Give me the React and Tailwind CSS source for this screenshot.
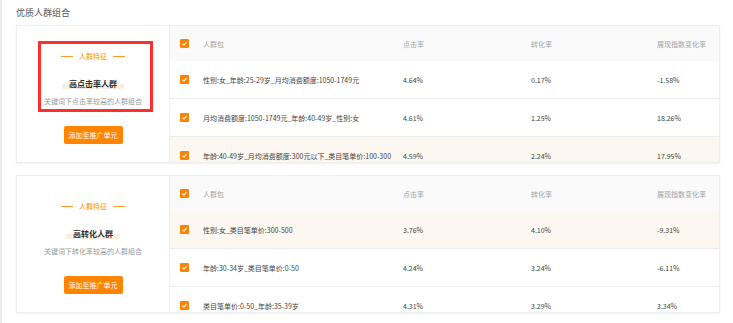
import React from 'react';

const font = { fontFamily: '"Noto Sans CJK SC", "Liberation Sans", sans-serif' };

const groups = [
    {
        title: '高点击率人群',
        desc: '关键词下点击率较高的人群组合',
        marked: true,
        rows: [
            { name: '性别:女_年龄:25-29岁_月均消费额度:1050-1749元', click: '4.64%', conv: '0.17%', idx: '-1.58%' },
            { name: '月均消费额度:1050-1749元_年龄:40-49岁_性别:女', click: '4.61%', conv: '1.25%', idx: '18.26%' },
            { name: '年龄:40-49岁_月均消费额度:300元以下_类目笔单价:100-300', click: '4.59%', conv: '2.24%', idx: '17.95%', hot: true },
        ],
    },
    {
        title: '高转化人群',
        desc: '关键词下转化率较高的人群组合',
        rows: [
            { name: '性别:女_类目笔单价:300-500', click: '3.76%', conv: '4.10%', idx: '-9.31%', hot: true },
            { name: '年龄:30-34岁_类目笔单价:0-50', click: '4.24%', conv: '3.24%', idx: '-6.11%' },
            { name: '类目笔单价:0-50_年龄:35-39岁', click: '4.31%', conv: '3.29%', idx: '3.34%' },
        ],
    },
];

function Check() {
    return (
        <span className="ml-[10px] flex h-[9px] w-[9px] items-center justify-center rounded-[1px] bg-[#ff8200]">
            <svg viewBox="0 0 10 10" className="h-[7px] w-[7px]">
                <path d="M2 5.2 L4.2 7.2 L8 3" fill="none" stroke="#fff" strokeWidth="1.6" />
            </svg>
        </span>
    );
}

const cols = 'grid grid-cols-[33px_200px_128px_126px_1fr] items-center';

function GroupCard({ group }) {
    return (
        <div className="flex h-[138px] overflow-hidden border border-[#eeeeee] bg-white shadow-[0_1px_2px_rgba(0,0,0,0.06)]">
            {/* feature panel */}
            <div className="relative flex w-[153px] shrink-0 flex-col items-center border-r border-[#eeeeee] pt-[25px]">
                <div className="flex items-center gap-[6px] text-[7px] leading-[10px] text-[#ff8a00]">
                    <span className="h-px w-[12px] bg-[#ff9a2e]" />
                    人群特征
                    <span className="h-px w-[12px] bg-[#ff9a2e]" />
                </div>
                <div className="mt-[17px] bg-[linear-gradient(transparent_55%,#f8efe3_55%)] px-[7px] text-[8px] leading-[11px] font-bold text-[#333]">
                    {group.title}
                </div>
                <div className="mt-[7px] text-[7px] leading-[10px] text-[#999]">{group.desc}</div>
                <button className="mt-[20px] h-[18px] w-[59px] rounded-[2px] bg-[#ff8400] text-[7px] text-white">
                    添加至推广单元
                </button>
                {group.marked && (
                    <div className="absolute left-[21px] top-[15px] h-[71px] w-[115px] border-[3px] border-[#ff2d2d]" />
                )}
            </div>

            {/* table */}
            <div className="flex-1 text-[7px] leading-[10px]">
                <div className={`${cols} h-[35px] bg-[#fafafa] text-[#a3a3a3]`}>
                    <Check />
                    <span>人群包</span>
                    <span>点击率</span>
                    <span>转化率</span>
                    <span>展现指数变化率</span>
                </div>
                {group.rows.map((r, i) => (
                    <div
                        key={i}
                        className={`${cols} h-[38px] shrink-0 border-b border-[#ececec] text-[#444] ${r.hot ? 'bg-[#fcf7f0]' : 'bg-white'}`}
                    >
                        <Check />
                        <span className="whitespace-nowrap">{r.name}</span>
                        <span>{r.click}</span>
                        <span>{r.conv}</span>
                        <span>{r.idx}</span>
                    </div>
                ))}
            </div>
        </div>
    );
}

export default function App() {
    return (
        <div style={font} className="h-[323px] w-[733px] overflow-hidden border-l-2 border-[#e6e9f0] bg-white pl-[14px] pr-[13px]">
            <div className="pt-[6px] text-[9px] leading-[13px] text-[#555]">优质人群组合</div>
            <div className="mt-[6px] flex flex-col gap-[12px]">
                {groups.map((g, i) => (
                    <GroupCard key={i} group={g} />
                ))}
            </div>
        </div>
    );
}
